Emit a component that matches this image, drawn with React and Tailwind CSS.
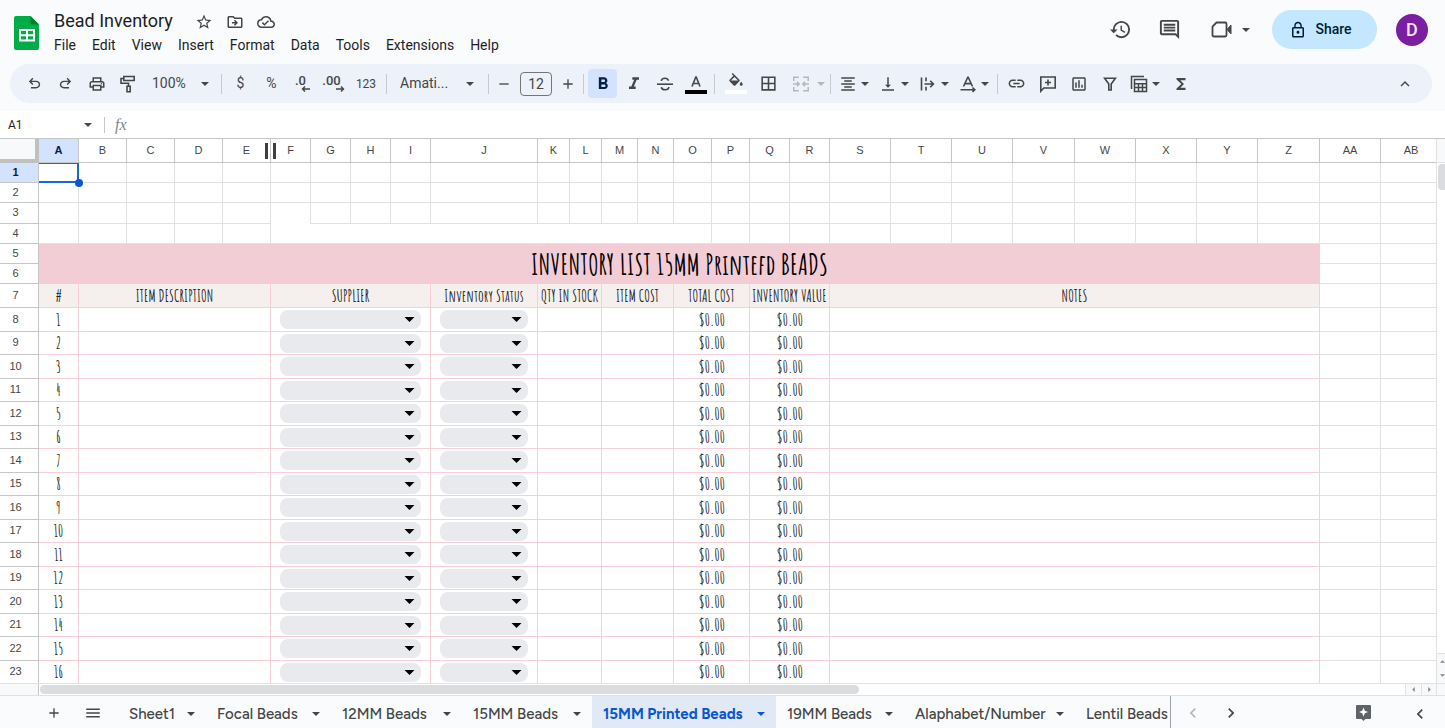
import React, { useState } from 'react';
import clsx from 'clsx';
import {
  MdStarBorder,
  MdOutlineDriveFileMove,
  MdOutlineCloudDone,
  MdHistory,
  MdOutlineInsertComment,
  MdLockOutline,
  MdOutlinePrint,
  MdAdd,
  MdRemove,
  MdFormatBold,
  MdFormatItalic,
  MdBorderAll,
  MdFormatAlignCenter,
  MdVerticalAlignBottom,
  MdLink,
  MdOutlineInsertChart,
  MdFunctions,
  MdMenu,
  MdChevronLeft,
  MdChevronRight,
  MdKeyboardArrowUp,
} from 'react-icons/md';

const menus = ['File', 'Edit', 'View', 'Insert', 'Format', 'Data', 'Tools', 'Extensions', 'Help'];

const columns = [
  { name: 'A', width: 'w-[40px]' },
  { name: 'B', width: 'w-[48px]' },
  { name: 'C', width: 'w-[48px]' },
  { name: 'D', width: 'w-[48px]' },
  { name: 'E', width: 'w-[48px]' },
  { name: 'F', width: 'w-[40px]' },
  { name: 'G', width: 'w-[40px]' },
  { name: 'H', width: 'w-[40px]' },
  { name: 'I', width: 'w-[40px]' },
  { name: 'J', width: 'w-[107px]' },
  { name: 'K', width: 'w-[32px]' },
  { name: 'L', width: 'w-[32px]' },
  { name: 'M', width: 'w-[36px]' },
  { name: 'N', width: 'w-[36px]' },
  { name: 'O', width: 'w-[38px]' },
  { name: 'P', width: 'w-[38px]' },
  { name: 'Q', width: 'w-[40px]' },
  { name: 'R', width: 'w-[40px]' },
  { name: 'S', width: 'w-[61px]' },
  { name: 'T', width: 'w-[61px]' },
  { name: 'U', width: 'w-[61px]' },
  { name: 'V', width: 'w-[62px]' },
  { name: 'W', width: 'w-[61px]' },
  { name: 'X', width: 'w-[61px]' },
  { name: 'Y', width: 'w-[61px]' },
  { name: 'Z', width: 'w-[62px]' },
  { name: 'AA', width: 'w-[61px]' },
  { name: 'AB', width: 'w-[61px]' },
];

const listHeaders = [
  { label: '#', span: 1 },
  { label: 'ITEM DESCRIPTION', span: 4 },
  { label: 'SUPPLIER', span: 4 },
  { label: 'Inventory Status', span: 1 },
  { label: 'QTY IN STOCK', span: 2 },
  { label: 'ITEM COST', span: 2 },
  { label: 'TOTAL COST', span: 2 },
  { label: 'INVENTORY VALUE', span: 2 },
  { label: 'NOTES', span: 8 },
];

const items = Array.from({ length: 16 }, (_, i) => ({ id: i + 1, total: '$0.00', value: '$0.00' }));

const sheets = [
  { name: 'Sheet1', width: 'w-[88px]' },
  { name: 'Focal Beads', width: 'w-[125px]' },
  { name: '12MM Beads', width: 'w-[131px]' },
  { name: '15MM Beads', width: 'w-[130px]' },
  { name: '15MM Printed Beads', width: 'w-[184px]' },
  { name: '19MM Beads', width: 'w-[128px]' },
  { name: 'Alaphabet/Number', width: 'w-[171px]' },
  { name: 'Lentil Beads', width: 'w-[128px]' },
];

const hand = "font-['Amatic_SC',sans-serif] font-bold";
const line = 'border-r border-b border-[#e1e2e3]';
const pinkLine = 'border-r border-b border-[#f8ced8]';

const Caret = ({ className }) => (
  <svg viewBox="0 0 10 5" className={clsx('shrink-0 fill-current', className || 'w-2 h-1')} aria-hidden="true">
    <path d="M0 0h10L5 5z" />
  </svg>
);

// Material Symbols glyphs that the icon package does not carry
const Symbol = ({ d, className }) => (
  <svg viewBox="0 -960 960 960" className={clsx('w-[17px] h-[17px] fill-current', className)} aria-hidden="true">
    <path d={d} />
  </svg>
);

const UNDO = 'M280-200v-80h284q63 0 109.5-40T720-420q0-60-46.5-100T564-560H312l104 104-56 56-200-200 200-200 56 56-104 104h252q97 0 166.5 63T800-420q0 94-69.5 157T564-200H280Z';
const REDO = 'M396-200q-97 0-166.5-63T160-420q0-94 69.5-157T396-640h252L544-744l56-56 200 200-200 200-56-56 104-104H396q-63 0-109.5 40T240-420q0 60 46.5 100T396-280h284v80H396Z';

const Stroke = ({ children, className, width = 1.6 }) => (
  <svg
    viewBox="0 0 18 18"
    className={clsx('w-[18px] h-[18px]', className)}
    fill="none"
    stroke="currentColor"
    strokeWidth={width}
    aria-hidden="true"
  >
    {children}
  </svg>
);

const PaintIcon = () => (
  <Stroke>
    <path d="M4.8 1.5h10.4v4H4.8zM4.8 3.5H2v4.8h7.5v3" />
    <path d="M8 11.3h3.2v5.4H8z" />
  </Stroke>
);

const StrikeIcon = () => (
  <Stroke>
    <path d="M1 9.2h16" />
    <path d="M12.6 5.6C12 4 10.8 3.2 9 3.2 7 3.2 5.4 4.3 5.4 5.9M5.3 12.2c.5 1.7 1.8 2.6 3.8 2.6 2.1 0 3.7-1 3.7-2.7" />
  </Stroke>
);

const MergeIcon = () => (
  <Stroke width={1.5}>
    <path d="M1.8 6V2.2h5M1.8 12v3.8h5M16.2 6V2.2h-5M16.2 12v3.8h-5M1 9h6M5 6.8L7.2 9 5 11.2M17 9h-6M13 6.8L10.8 9l2.2 2.2" />
  </Stroke>
);

const OverflowIcon = () => (
  <Stroke>
    <path d="M2.5 2.5v13M7 2.5v3.8M7 11.7v3.8M5.5 9H14M11.2 5.8L14.4 9l-3.2 3.2" />
  </Stroke>
);

const RotateIcon = () => (
  <Stroke>
    <path d="M4.5 11.5L8.8 2.2h.4l4.3 9.3M6.2 8.6h5.6M1.5 14.7h14M13.5 12.5l2.3 2.2-2.3 2.2" />
  </Stroke>
);

const AddCommentIcon = () => (
  <Stroke>
    <path d="M1.8 16.2V2h14.4v11H4.8zM9 4.5v6M6 7.5h6" />
  </Stroke>
);

const FilterIcon = () => (
  <Stroke>
    <path d="M3.6 3.3h10.8L10.2 9v6H7.8V9z" />
  </Stroke>
);

const TableIcon = () => (
  <Stroke width={1.5}>
    <path d="M1.5 14V1.5H14" />
    <path d="M4.5 4.5h12v12h-12zM4.5 8.7h12M4.5 12.6h12M8.5 8.7v7.8M12.5 8.7v7.8" />
  </Stroke>
);

// Digits with an arrow hanging below their right end
const DecimalIcon = ({ digits, back }) => (
  <span className="flex flex-col leading-none">
    <span className="text-[13px] font-medium h-[11px] leading-[11px] pr-1">{digits}</span>
    <svg viewBox="0 0 9 6" className="w-[9px] h-[6px] self-end" fill="none" stroke="currentColor" strokeWidth="1.4" aria-hidden="true">
      {back ? <path d="M9 3H1.5M4 .5L1.5 3 4 5.5" /> : <path d="M0 3h7.5M5 .5L7.5 3 5 5.5" />}
    </svg>
  </span>
);

const ToolButton = ({ label, children, className }) => (
  <button aria-label={label} className={clsx('h-[29px] flex items-center justify-center rounded', className || 'w-[31px]')}>
    {children}
  </button>
);

const SplitButton = ({ label, children }) => (
  <button aria-label={label} className="h-[29px] w-[40px] flex items-center pl-0.5 gap-px rounded">
    <span className="w-6 flex justify-center">{children}</span>
    <Caret />
  </button>
);

const Divider = () => <span className="w-px h-5 mx-[3px] bg-[#c7cbd1] shrink-0" />;

const SheetsLogo = () => (
  <svg viewBox="0 0 25 34" className="w-[25px] h-[34px]" aria-hidden="true">
    <path d="M2 0H16.5L25 8.5V32a2 2 0 0 1-2 2H2a2 2 0 0 1-2-2V2a2 2 0 0 1 2-2z" fill="#00ac47" />
    <path d="M16.5 0L25 8.5h-6.5a2 2 0 0 1-2-2z" fill="#00832d" />
    <path d="M5 13h16v12.5H5zM7 15v3.2h5V15zM14 15v3.2h5V15zM7 20.2v3.3h5v-3.3zM14 20.2v3.3h5v-3.3z" fill="#fff" fillRule="evenodd" />
  </svg>
);

const Header = () => (
  <header className="h-16 shrink-0 flex items-start pl-[14px] pr-[17px] text-[#1f1f1f]">
    <div className="pt-4">
      <SheetsLogo />
    </div>
    <div className="pl-[15px] pt-2">
      <div className="flex items-center h-[26px]">
        <h1 className="text-[18px] leading-6">Bead Inventory</h1>
        <div className="flex items-center gap-[13px] pl-[22px] pt-0.5 text-[#444746]">
          <button aria-label="Star"><MdStarBorder className="w-[18px] h-[18px]" /></button>
          <button aria-label="Move"><MdOutlineDriveFileMove className="w-[18px] h-[18px]" /></button>
          <button aria-label="Saved to Drive"><MdOutlineCloudDone className="w-[18px] h-[18px]" /></button>
        </div>
      </div>
      <nav className="flex gap-4">
        {menus.map((menu) => (
          <button key={menu} className="text-[14px] leading-[22px]">{menu}</button>
        ))}
      </nav>
    </div>
    <div className="ml-auto flex items-center pt-[10px] text-[#444746]">
      <button aria-label="Version history" className="mr-[26px]"><MdHistory className="w-[23px] h-[23px]" /></button>
      <button aria-label="Comments" className="mr-[30px]"><MdOutlineInsertComment className="w-[23px] h-[23px]" /></button>
      <button aria-label="Join a call" className="flex items-center gap-[10px] mr-[22px]">
        <svg viewBox="0 0 21 17" className="w-[21px] h-[17px]" fill="none" stroke="currentColor" strokeWidth="1.8" aria-hidden="true">
          <path d="M5.5 1.5H14q1.5 0 1.5 1.5v11q0 1.5-1.5 1.5H3q-1.5 0-1.5-1.5V5.5z" />
          <path d="M16 8.5L20 4v9z" fill="currentColor" strokeWidth="1" />
        </svg>
        <Caret />
      </button>
      <button className="h-[39px] w-[105px] rounded-full bg-[#c2e7ff] text-[#001d35] text-[14px] font-medium flex items-center justify-center gap-2 pr-2 mr-[19px]">
        <MdLockOutline className="w-[18px] h-[18px]" />
        Share
      </button>
      <button aria-label="Account" className="w-8 h-8 rounded-full bg-[#7b1fa2] text-[#f3e5f5] text-[18px] font-medium">D</button>
    </div>
  </header>
);

const Toolbar = () => (
  <div className="mx-[10px] mr-[13px] h-[39px] shrink-0 rounded-full bg-[#ecf1fa] pl-[9px] pr-[10px] flex items-center text-[#444746]">
    <ToolButton label="Undo"><Symbol d={UNDO} /></ToolButton>
    <ToolButton label="Redo"><Symbol d={REDO} /></ToolButton>
    <ToolButton label="Print"><MdOutlinePrint className="w-[18px] h-[18px]" /></ToolButton>
    <ToolButton label="Paint format"><PaintIcon /></ToolButton>
    <button className="w-[75px] h-[29px] px-[9px] flex items-center justify-between text-[14px]">
      100%
      <Caret />
    </button>
    <Divider />
    <ToolButton label="Currency"><span className="text-[14px]">$</span></ToolButton>
    <ToolButton label="Percent"><span className="text-[14px]">%</span></ToolButton>
    <ToolButton label="Decrease decimal places"><DecimalIcon digits=".0" back /></ToolButton>
    <ToolButton label="Increase decimal places"><DecimalIcon digits=".00" /></ToolButton>
    <ToolButton label="More formats" className="w-[34px]"><span className="text-[12px]">123</span></ToolButton>
    <Divider />
    <button className="w-[95px] h-[29px] pl-[10px] pr-[11px] flex items-center justify-between text-[14px]">
      Amati...
      <Caret />
    </button>
    <Divider />
    <ToolButton label="Decrease font size" className="w-6"><MdRemove className="w-4 h-4" /></ToolButton>
    <input aria-label="Font size" defaultValue="12" className="w-8 h-6 mx-1 rounded border border-[#747775] text-center text-[14px] bg-transparent outline-none" />
    <ToolButton label="Increase font size" className="w-6"><MdAdd className="w-4 h-4" /></ToolButton>
    <Divider />
    <ToolButton label="Bold" className="w-[29px] mx-px bg-[#d3e3fd] text-[#041e49]"><MdFormatBold className="w-5 h-5" /></ToolButton>
    <ToolButton label="Italic"><MdFormatItalic className="w-5 h-5" /></ToolButton>
    <ToolButton label="Strikethrough"><StrikeIcon /></ToolButton>
    <ToolButton label="Text color">
      <svg viewBox="0 0 22 22" className="w-[22px] h-[22px]" fill="none" stroke="currentColor" strokeWidth="1.6" aria-hidden="true">
        <path d="M7 13.5L10.8 4h.4L15 13.5M8.3 10.5h5.4" />
        <path d="M0 19h22" stroke="#000" strokeWidth="4" />
      </svg>
    </ToolButton>
    <Divider />
    <ToolButton label="Fill color" className="w-[35px]">
      <svg viewBox="0 0 22 22" className="w-[22px] h-[22px]" aria-hidden="true">
        <path
          transform="translate(2 0) scale(.75)"
          fill="currentColor"
          d="M16.56 8.94L7.62 0 6.21 1.41l2.38 2.38-5.15 5.15c-.59.59-.59 1.54 0 2.12l5.5 5.5c.29.29.68.44 1.06.44s.77-.15 1.06-.44l5.5-5.5c.59-.58.59-1.53 0-2.12zM5.21 10L10 5.21 14.79 10H5.21zM19 11.5s-2 2.17-2 3.5c0 1.1.9 2 2 2s2-.9 2-2c0-1.33-2-3.5-2-3.5z"
        />
        <path d="M0 17h22v4H0z" fill="#fff" />
      </svg>
    </ToolButton>
    <ToolButton label="Borders"><MdBorderAll className="w-[19px] h-[19px]" /></ToolButton>
    <button aria-label="Merge cells" className="h-[29px] w-[43px] pl-[5px] flex items-center gap-1 text-[#b4b8bd]">
      <span className="w-6 flex justify-center"><MergeIcon /></span>
      <Caret />
    </button>
    <Divider />
    <SplitButton label="Horizontal align"><MdFormatAlignCenter className="w-[18px] h-[18px]" /></SplitButton>
    <SplitButton label="Vertical align"><MdVerticalAlignBottom className="w-[18px] h-[18px]" /></SplitButton>
    <SplitButton label="Text wrapping"><OverflowIcon /></SplitButton>
    <SplitButton label="Text rotation"><RotateIcon /></SplitButton>
    <Divider />
    <ToolButton label="Insert link"><MdLink className="w-[19px] h-[19px]" /></ToolButton>
    <ToolButton label="Insert comment"><AddCommentIcon /></ToolButton>
    <ToolButton label="Insert chart"><MdOutlineInsertChart className="w-[18px] h-[18px]" /></ToolButton>
    <ToolButton label="Create a filter"><FilterIcon /></ToolButton>
    <SplitButton label="Filter views"><TableIcon /></SplitButton>
    <ToolButton label="Functions"><MdFunctions className="w-[18px] h-[18px]" /></ToolButton>
    <button aria-label="Hide the menus" className="ml-auto mr-2"><MdKeyboardArrowUp className="w-[18px] h-[18px]" /></button>
  </div>
);

const FormulaBar = () => (
  <div className="mt-2 h-[27px] shrink-0 bg-white flex items-center text-[#1f1f1f]">
    <input aria-label="Name box" defaultValue="A1" className="w-[75px] pl-2 text-[12px] outline-none" />
    <button aria-label="Named ranges" className="w-[25px] flex justify-center text-[#444746]"><Caret /></button>
    <span className="w-px h-4 ml-[4px] bg-[#c7c7c7]" />
    <span className="pl-[10px] font-['Liberation_Serif',serif] italic text-[16px] leading-none text-[#80868b]">fx</span>
    <input aria-label="Formula" className="flex-1 ml-3 outline-none" />
  </div>
);

const RowHeader = ({ n, active }) => (
  <th
    scope="row"
    className={clsx(
      'border-r border-b border-[#c4c7c5] text-[11px] leading-none text-center pr-[7px] pb-px',
      active ? 'bg-[#d3e3fd] font-bold text-[#041e49]' : 'font-normal text-[#444746]'
    )}
  >
    {n}
  </th>
);

const blankCells = (names) => names.map((col) => <td key={col.name} className={line} />);

const Dropdown = ({ label }) => (
  <span className="relative block mx-[9px]">
    <select aria-label={label} className="block w-full h-[19px] rounded-[8px] bg-[#e8eaed] appearance-none outline-none">
      <option value=""></option>
    </select>
    <svg viewBox="0 0 12 6" className="absolute right-[6px] top-[7px] w-[11px] h-[5px] pointer-events-none" aria-hidden="true">
      <path d="M0 0h12L6 6z" />
    </svg>
  </span>
);

const Grid = () => (
  <div className="flex-1 min-h-0 flex border-t border-[#c4c7c5]">
    <div className="flex-1 min-w-0 overflow-hidden bg-white">
      <table className="table-fixed w-full border-separate border-spacing-0 font-['Liberation_Sans',sans-serif]">
        <colgroup>
          <col className="w-[39px]" />
          {columns.map((col) => <col key={col.name} className={col.width} />)}
        </colgroup>
        <thead>
          <tr className="h-6">
            <td className="bg-[#f8f9fa] border-r-4 border-b-4 border-[#c0c0c0]" />
            {columns.map((col) => (
              <th
                key={col.name}
                scope="col"
                className={clsx(
                  'relative border-r border-b border-[#c4c7c5] text-[11px] leading-none',
                  col.name === 'A' ? 'bg-[#d3e3fd] font-bold text-[#041e49]' : 'font-normal text-[#444746]'
                )}
              >
                {col.name}
                {col.name === 'E' && (
                  <span className="absolute z-10 top-1 -right-[6px] w-[11px] h-4 border-x-[3px] border-[#3c4043]" />
                )}
              </th>
            ))}
          </tr>
        </thead>
        <tbody>
          <tr className="h-5">
            <RowHeader n={1} active />
            <td className={clsx(line, 'relative')}>
              <span className="absolute inset-0 -right-px -bottom-px border-r-2 border-b-2 border-t border-[#1a66dc]" />
              <span className="absolute z-10 -right-[5px] -bottom-[5px] w-2 h-2 rounded-full bg-[#0b57d0]" />
            </td>
            {blankCells(columns.slice(1))}
          </tr>
          <tr className="h-5">
            <RowHeader n={2} />
            {blankCells(columns)}
          </tr>
          <tr className="h-[21px]">
            <RowHeader n={3} />
            {blankCells(columns.slice(0, 5))}
            <td className="border-r border-[#e1e2e3]" />
            {blankCells(columns.slice(6))}
          </tr>
          <tr className="h-5">
            <RowHeader n={4} />
            {blankCells(columns.slice(0, 5))}
            <td colSpan={10} className={line} />
            {blankCells(columns.slice(15))}
          </tr>
          <tr className="h-5">
            <RowHeader n={5} />
            <td colSpan={26} rowSpan={2} className="bg-[#f3cdd6] text-center text-black">
              <div className={clsx(hand, 'text-[29px] leading-9')}>INVENTORY LIST 15MM Printefd BEADS</div>
            </td>
            {blankCells(columns.slice(26))}
          </tr>
          <tr className="h-5">
            <RowHeader n={6} />
            {blankCells(columns.slice(26))}
          </tr>
          <tr className="h-6">
            <RowHeader n={7} />
            {listHeaders.map((head) => (
              <th key={head.label} colSpan={head.span} className={clsx(pinkLine, hand, 'bg-[#f5f0ee] text-[16px] leading-none text-[#1f1f1f] whitespace-nowrap')}>
                {head.label}
              </th>
            ))}
            {blankCells(columns.slice(26))}
          </tr>
          {items.map((item, i) => (
            <tr key={item.id} className={i % 2 === 0 ? 'h-6' : 'h-[23px]'}>
              <RowHeader n={item.id + 7} />
              <td className={clsx(pinkLine, hand, 'text-center text-[16px] leading-none text-[#1f1f1f]')}>{item.id}</td>
              <td colSpan={4} className={pinkLine} />
              <td colSpan={4} className={pinkLine}><Dropdown label={`Supplier ${item.id}`} /></td>
              <td className={pinkLine}><Dropdown label={`Inventory status ${item.id}`} /></td>
              <td colSpan={2} className={pinkLine} />
              <td colSpan={2} className={pinkLine} />
              <td colSpan={2} className={clsx(pinkLine, hand, 'text-center text-[16px] leading-none text-[#1f1f1f]')}>{item.total}</td>
              <td colSpan={2} className={clsx(pinkLine, hand, 'text-center text-[16px] leading-none text-[#1f1f1f]')}>{item.value}</td>
              <td colSpan={8} className={pinkLine} />
              {blankCells(columns.slice(26))}
            </tr>
          ))}
        </tbody>
      </table>
    </div>
    <div className="w-[9px] shrink-0 flex flex-col border-l border-[#e1e2e3] bg-white">
      <div className="h-6 bg-[#f8f9fa] border-b border-[#e1e2e3]" />
      <div className="ml-px mt-px h-[26px] rounded-l bg-[#dadce0]" />
      <div className="mt-auto h-[30px] bg-[#f8f9fa] border-t border-[#e1e2e3] flex flex-col items-end justify-around text-[#80868b]">
        <Caret className="w-[5px] h-[3px] rotate-180" />
        <Caret className="w-[5px] h-[3px]" />
      </div>
    </div>
  </div>
);

const ScrollRow = () => (
  <div className="h-3 shrink-0 flex border-t border-[#e1e2e3] bg-white">
    <div className="w-[39px] bg-[#f8f9fa] border-r border-[#c4c7c5]" />
    <div className="flex-1 pl-px pt-px">
      <div className="h-[9px] w-3/5 rounded-full bg-[#dadce0]" />
    </div>
    <div className="w-4 flex items-center justify-center bg-[#f8f9fa] border-l border-[#e1e2e3] text-[#80868b]">
      <Caret className="w-[5px] h-[3px] rotate-90" />
    </div>
    <div className="w-4 flex items-center justify-center bg-[#f8f9fa] border-x border-[#e1e2e3] text-[#80868b]">
      <Caret className="w-[5px] h-[3px] -rotate-90" />
    </div>
    <div className="w-2 bg-[#f8f9fa]" />
  </div>
);

const SheetTabs = () => {
  const [current, setCurrent] = useState('15MM Printed Beads');

  return (
    <footer className="h-[33px] shrink-0 flex items-center border-t border-[#dfe1e5] text-[#444746]">
      <button aria-label="Add sheet" className="w-[31px] ml-[38px] pt-0.5 flex justify-center"><MdAdd className="w-4 h-4" /></button>
      <button aria-label="All sheets" className="w-[47px] pt-0.5 flex justify-center"><MdMenu className="w-[18px] h-[18px]" /></button>
      <div className="flex h-full w-[1053px] ml-0.5 overflow-hidden border-r border-[#9aa0a6] font-['Google_Sans_Text','Google_Sans','Product_Sans','Figtree','Inter',sans-serif]">
        {sheets.map((sheet) => (
          <button
            key={sheet.name}
            onClick={() => setCurrent(sheet.name)}
            className={clsx(
              'h-full shrink-0 px-[11px] pt-1 flex items-center justify-between text-[15px] whitespace-nowrap',
              sheet.width,
              sheet.name === current ? 'bg-[#e1e9f7] text-[#0b57d0] font-bold' : 'font-medium'
            )}
          >
            {sheet.name}
            <Caret />
          </button>
        ))}
      </div>
      <button aria-label="Scroll left" className="ml-3 pt-0.5 text-[#b4b8bd]"><MdChevronLeft className="w-5 h-5" /></button>
      <button aria-label="Scroll right" className="ml-[18px] pt-0.5"><MdChevronRight className="w-5 h-5" /></button>
      <button aria-label="Explore" className="ml-auto mr-[39px] pt-0.5">
        <svg viewBox="0 0 15 16" className="w-[15px] h-4" aria-hidden="true">
          <path d="M1 0h13a1 1 0 0 1 1 1v12a1 1 0 0 1-1 1H9.5L7.5 16l-2-2H1a1 1 0 0 1-1-1V1a1 1 0 0 1 1-1z" fill="#5f6368" />
          <path d="M7.5 2.5l1.3 3.2L12 7l-3.2 1.3-1.3 3.2-1.3-3.2L3 7l3.2-1.3z" fill="#fff" />
        </svg>
      </button>
      <button aria-label="Show side panel" className="mr-[15px] pt-1"><MdChevronLeft className="w-5 h-5" /></button>
    </footer>
  );
};

const App = () => (
  <div className="h-screen flex flex-col overflow-hidden bg-[#f9fbfd] font-['Google_Sans','Roboto',sans-serif]">
    <Header />
    <Toolbar />
    <FormulaBar />
    <Grid />
    <ScrollRow />
    <SheetTabs />
  </div>
);

export default App;
